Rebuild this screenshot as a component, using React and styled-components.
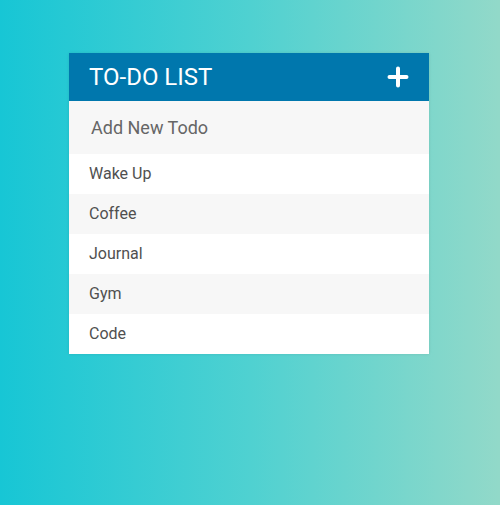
import React from "react";
import styled, { createGlobalStyle } from "styled-components";

const Global = createGlobalStyle`
  html, body { margin: 0; padding: 0; height: 100%; }
  body {
    font-family: Roboto, "Liberation Sans", sans-serif;
    background: linear-gradient(to right, #17c6d5 0%, #4fd1d1 50%, #92d9c9 100%);
    min-height: 505px;
  }
  #root { min-height: 505px; }
`;

const Page = styled.div`
  padding-top: 53px;
  padding-left: 69px;
`;

const Card = styled.div`
  width: 360px;
  background: #fff;
  box-shadow: 0 0 3px rgba(0, 0, 0, 0.1);
`;

const Header = styled.div`
  height: 48px;
  background: #0077ad;
  display: flex;
  align-items: center;
  justify-content: space-between;
  padding: 0 20px;
  box-sizing: border-box;
`;

const Title = styled.h1`
  margin: 0;
  color: #fff;
  font-size: 24px;
  font-weight: 400;
  text-transform: uppercase;
`;

const AddButton = styled.button`
  border: 0;
  background: none;
  padding: 0;
  display: flex;
  cursor: pointer;
`;

const Input = styled.input`
  display: block;
  width: 100%;
  box-sizing: border-box;
  height: 53px;
  border: 0;
  outline: none;
  background: #f7f7f7;
  padding: 0 22px;
  font-family: Roboto, "Liberation Sans", sans-serif;
  font-size: 18px;
  color: #666;
  &::placeholder { color: #666; }
`;

const List = styled.ul`
  list-style: none;
  margin: 0;
  padding: 0;
`;

const Item = styled.li`
  height: 40px;
  line-height: 40px;
  padding: 0 20px;
  font-size: 16px;
  color: #505050;
  background: ${(p) => (p.$alt ? "#f7f7f7" : "#fff")};
`;

const todos = ["Wake Up", "Coffee", "Journal", "Gym", "Code"];

export default function App() {
  return (
    <>
      <Global />
      <Page>
        <Card>
          <Header>
            <Title>To-Do List</Title>
            <AddButton aria-label="Add">
              <svg width="22" height="22" viewBox="0 0 22 22">
                <path d="M11 2.5v17M2.5 11h17" stroke="#fff" strokeWidth="4" strokeLinecap="round" />
              </svg>
            </AddButton>
          </Header>
          <Input placeholder="Add New Todo" />
          <List>
            {todos.map((t, i) => (
              <Item key={t} $alt={i % 2 === 1}>{t}</Item>
            ))}
          </List>
        </Card>
      </Page>
    </>
  );
}
